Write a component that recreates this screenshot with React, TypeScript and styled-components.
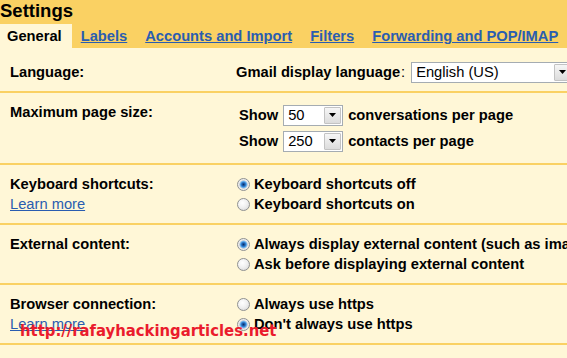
import React from 'react';
import styled, { createGlobalStyle } from 'styled-components';

const Global = createGlobalStyle`
  html, body { margin: 0; padding: 0; background: #fff7d7; }
  body { overflow: hidden; }
`;

const Page = styled.div`
  position: relative;
  width: 567px;
  height: 358px;
  overflow: hidden;
  background: #fff7d7;
  font-family: "Liberation Sans", Arial, sans-serif;
  font-size: 14.7px;
  color: #000;
`;

const Header = styled.div`
  background: #fad163;
`;

const Title = styled.h1`
  margin: 0;
  height: 24px;
  line-height: 22px;
  font-size: 18.5px;
  font-weight: bold;
`;

const TabBar = styled.div`
  display: flex;
  height: 24px;
`;

const Tab = styled.a<{ $active?: boolean; $first?: boolean }>`
  display: block;
  line-height: 24px;
  font-weight: bold;
  white-space: nowrap;
  padding: 0 ${(p) => (p.$first ? '10px' : '9px')} 0 ${(p) => (p.$first ? '7px' : '9px')};
  color: ${(p) => (p.$active ? '#000' : '#2a5db0')};
  text-decoration: ${(p) => (p.$active ? 'none' : 'underline')};
  background: ${(p) => (p.$active ? '#fff7d7' : 'transparent')};
  cursor: pointer;
`;

const Content = styled.div`
  padding-top: 5px;
`;

const Row = styled.div`
  display: grid;
  grid-template-columns: 236px 1fr;
  padding: 9px 0;
  border-bottom: 2px solid #fad163;
`;

const LabelCell = styled.div`
  padding-left: 10px;
  line-height: 20px;
  white-space: nowrap;
`;

const LabelText = styled.div`
  font-weight: bold;
`;

const LearnMore = styled.a`
  display: block;
  color: #2a5db0;
  text-decoration: underline;
  cursor: pointer;
`;

const OptionCell = styled.div`
  display: flex;
  flex-direction: column;
  min-width: 0;
  white-space: nowrap;
`;

const Line = styled.div<{ $h?: number }>`
  display: flex;
  align-items: center;
  height: ${(p) => p.$h ?? 20}px;
  font-weight: bold;
`;

const Colon = styled.span`
  font-weight: normal;
  margin-left: 1px;
`;

const ShowText = styled.span`
  margin-left: 3px;
`;

const SelectBox = styled.div<{ $w: number; $gap?: number }>`
  display: flex;
  align-items: stretch;
  box-sizing: border-box;
  width: ${(p) => p.$w}px;
  height: 21px;
  margin: 0 5px 0 ${(p) => p.$gap ?? 5}px;
  flex-shrink: 0;
  border: 1px solid #a5acb2;
  background: #fff;
  font-weight: normal;
`;

const SelectValue = styled.span`
  flex: 1;
  padding-left: 4px;
  line-height: 19px;
`;

const ArrowButton = styled.span`
  display: flex;
  align-items: center;
  justify-content: center;
  box-sizing: border-box;
  width: 17px;
  margin: 1px;
  border: 1px solid #c3c3c3;
  border-radius: 1px;
  background: linear-gradient(#f6f6f6, #dcdcdc);
`;

const Radio = styled.span<{ $checked?: boolean }>`
  display: inline-block;
  flex-shrink: 0;
  width: 13px;
  height: 13px;
  box-sizing: border-box;
  margin: 0 4px 0 1px;
  border-radius: 50%;
  border: 1px solid #8f9192;
  background: ${(p) =>
    p.$checked
      ? 'radial-gradient(circle at 50% 50%, #0c2f63 0, #1d5cab 1.4px, #3f8fdc 2.6px, #7fc0f3 3.4px, #b9c7d4 3.9px, #e9e9e9 4.4px, #fafafa 100%)'
      : 'radial-gradient(circle at 40% 35%, #ffffff 0, #f1f1f1 45%, #d3d3d3 100%)'};
`;

const Watermark = styled.div`
  position: absolute;
  left: 20px;
  top: 321px;
  font-family: "DejaVu Sans Condensed", "DejaVu Sans", sans-serif;
  font-weight: bold;
  font-size: 16.5px;
  line-height: 20px;
  color: #ea1c2d;
  white-space: nowrap;
`;

const Arrow = () => (
  <svg width="7" height="4" viewBox="0 0 7 4">
    <path d="M0 0H7L3.5 4Z" fill="#000" />
  </svg>
);

const Select = ({ value, w, gap }: { value: string; w: number; gap?: number }) => (
  <SelectBox $w={w} $gap={gap}>
    <SelectValue>{value}</SelectValue>
    <ArrowButton>
      <Arrow />
    </ArrowButton>
  </SelectBox>
);

const Option = ({ checked, children }: { checked?: boolean; children: React.ReactNode }) => (
  <Line>
    <Radio $checked={checked} />
    {children}
  </Line>
);

export default function App() {
  return (
    <Page>
      <Global />
      <Header>
        <Title>Settings</Title>
        <TabBar>
          <Tab $active $first>General</Tab>
          <Tab>Labels</Tab>
          <Tab>Accounts and Import</Tab>
          <Tab>Filters</Tab>
          <Tab>Forwarding and POP/IMAP</Tab>
        </TabBar>
      </Header>
      <Content>
        <Row>
          <LabelCell>
            <LabelText>Language:</LabelText>
          </LabelCell>
          <OptionCell>
            <Line>
              Gmail display language<Colon>:</Colon>
              <Select value="English (US)" w={162} gap={6} />
            </Line>
          </OptionCell>
        </Row>
        <Row>
          <LabelCell>
            <LabelText>Maximum page size:</LabelText>
          </LabelCell>
          <OptionCell>
            <Line $h={26}>
              <ShowText>Show</ShowText>
              <Select value="50" w={60} />
              conversations per page
            </Line>
            <Line $h={26}>
              <ShowText>Show</ShowText>
              <Select value="250" w={60} />
              contacts per page
            </Line>
          </OptionCell>
        </Row>
        <Row>
          <LabelCell>
            <LabelText>Keyboard shortcuts:</LabelText>
            <LearnMore>Learn more</LearnMore>
          </LabelCell>
          <OptionCell>
            <Option checked>Keyboard shortcuts off</Option>
            <Option>Keyboard shortcuts on</Option>
          </OptionCell>
        </Row>
        <Row>
          <LabelCell>
            <LabelText>External content:</LabelText>
          </LabelCell>
          <OptionCell>
            <Option checked>Always display external content (such as images) sent by trusted senders</Option>
            <Option>Ask before displaying external content</Option>
          </OptionCell>
        </Row>
        <Row>
          <LabelCell>
            <LabelText>Browser connection:</LabelText>
            <LearnMore>Learn more</LearnMore>
          </LabelCell>
          <OptionCell>
            <Option>Always use https</Option>
            <Option checked>Don't always use https</Option>
          </OptionCell>
        </Row>
        <Row>
          <LabelCell>
            <LabelText>Conversation View:</LabelText>
          </LabelCell>
          <OptionCell>
            <Option checked>Conversation view on</Option>
            <Option>Conversation view off</Option>
          </OptionCell>
        </Row>
      </Content>
      <Watermark>http://rafayhackingarticles.net</Watermark>
    </Page>
  );
}
